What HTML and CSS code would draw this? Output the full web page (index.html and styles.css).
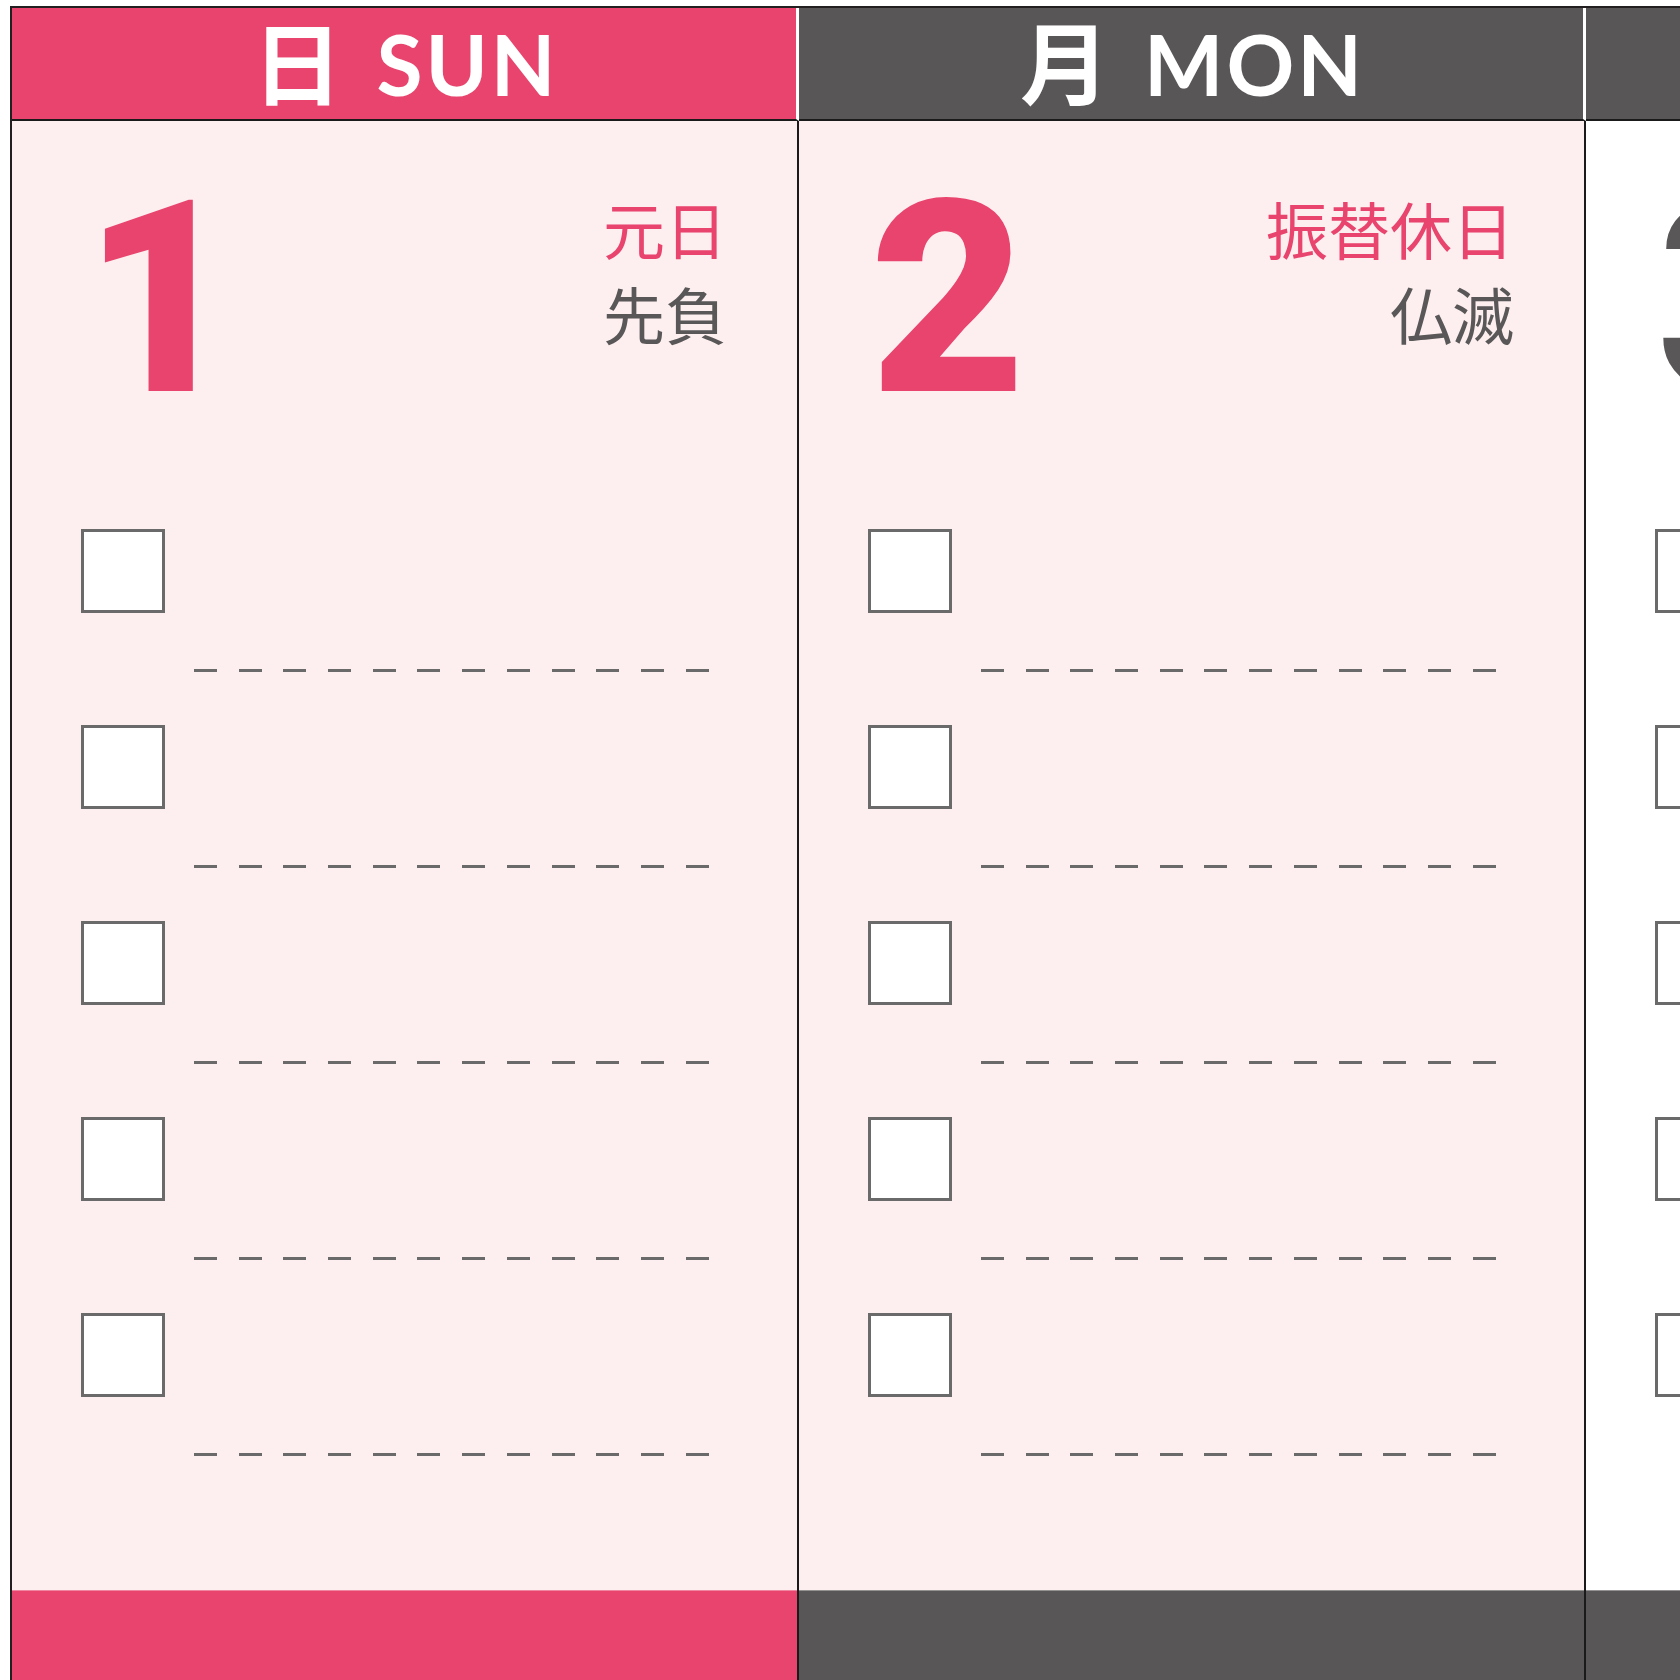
FILE: index.html
```html
<!DOCTYPE html>
<html lang="ja">
<head>
<meta charset="utf-8">
<title>1月 カレンダー</title>
<link rel="stylesheet" href="styles.css">
</head>
<body>
<main class="calendar">
  <section class="day day--holiday day--sun">
    <header class="day-head"><span class="wk-ja">日</span><span class="wk-en">SUN</span></header>
    <div class="day-body">
      <div class="day-top">
        <div class="date">1</div>
        <div class="notes">
          <p class="holiday">元日</p>
          <p class="rokuyo">先負</p>
        </div>
      </div>
      <ul class="tasks">
        <li class="task"><span class="box"></span><span class="rule"></span></li>
        <li class="task"><span class="box"></span><span class="rule"></span></li>
        <li class="task"><span class="box"></span><span class="rule"></span></li>
        <li class="task"><span class="box"></span><span class="rule"></span></li>
        <li class="task"><span class="box"></span><span class="rule"></span></li>
      </ul>
    </div>
    <footer class="day-foot"></footer>
  </section>

  <section class="day day--holiday">
    <header class="day-head"><span class="wk-ja">月</span><span class="wk-en">MON</span></header>
    <div class="day-body">
      <div class="day-top">
        <div class="date">2</div>
        <div class="notes">
          <p class="holiday">振替休日</p>
          <p class="rokuyo">仏滅</p>
        </div>
      </div>
      <ul class="tasks">
        <li class="task"><span class="box"></span><span class="rule"></span></li>
        <li class="task"><span class="box"></span><span class="rule"></span></li>
        <li class="task"><span class="box"></span><span class="rule"></span></li>
        <li class="task"><span class="box"></span><span class="rule"></span></li>
        <li class="task"><span class="box"></span><span class="rule"></span></li>
      </ul>
    </div>
    <footer class="day-foot"></footer>
  </section>

  <section class="day">
    <header class="day-head"><span class="wk-ja">火</span><span class="wk-en">TUE</span></header>
    <div class="day-body">
      <div class="day-top">
        <div class="date">3</div>
        <div class="notes">
          <p class="holiday"></p>
          <p class="rokuyo">大安</p>
        </div>
      </div>
      <ul class="tasks">
        <li class="task"><span class="box"></span><span class="rule"></span></li>
        <li class="task"><span class="box"></span><span class="rule"></span></li>
        <li class="task"><span class="box"></span><span class="rule"></span></li>
        <li class="task"><span class="box"></span><span class="rule"></span></li>
        <li class="task"><span class="box"></span><span class="rule"></span></li>
      </ul>
    </div>
    <footer class="day-foot"></footer>
  </section>
</main>
</body>
</html>
```

FILE: styles.css
```css
* {
  box-sizing: border-box;
}

html,
body {
  margin: 0;
  padding: 0;
  background: #ffffff;
  overflow: hidden;
}

body {
  width: 1680px;
  height: 1680px;
  font-family: "Noto Sans CJK JP", "Noto Sans", sans-serif;
}

.calendar {
  display: flex;
  width: max-content;
  margin: 6px 0 0 10px;
  border-top: 2px solid #231f20;
  border-left: 2px solid #231f20;
}

.day {
  flex: none;
  width: 787px;
  display: flex;
  flex-direction: column;
}

/* header */
.day-head {
  height: 113px;
  background: #595657;
  color: #ffffff;
  border-bottom: 2px solid #1a1a1a;
  border-right: 3px solid #ffffff;
  text-align: center;
  font-family: Lato, "Noto Sans CJK JP", sans-serif;
  font-weight: 700;
  font-size: 84px;
  line-height: 111px;
  white-space: nowrap;
}

.day--sun .day-head,
.day--sun .day-foot {
  background: #e8446d;
}

.wk-ja {
  display: inline-block;
  font-family: "Noto Sans CJK JP", sans-serif;
  font-size: 90px;
  font-weight: 700;
  line-height: 90px;
  margin-right: 34px;
  position: relative;
  top: 2px;
}

.wk-en {
  display: inline-block;
  line-height: 84px;
  letter-spacing: 3px;
  margin-right: -3px;
}

/* body */
.day-body {
  height: 1469px;
  background: #ffffff;
  border-right: 2px solid #1a1a1a;
}

.day--holiday .day-body {
  background: #fdeff0;
}

.day-top {
  height: 408px;
  display: flex;
  justify-content: space-between;
  align-items: flex-start;
  padding: 0 70px 0 71px;
}

.date {
  margin-top: 44px;
  font-family: Roboto, "Liberation Sans", sans-serif;
  font-weight: 900;
  font-size: 269px;
  line-height: 1;
  font-variant-numeric: tabular-nums;
  color: #595757;
}

.day--holiday .date {
  color: #e8446d;
}

.notes {
  margin-top: 65px;
  text-align: right;
  font-size: 62px;
  font-weight: 400;
  line-height: 85px;
}

.notes p {
  margin: 0;
  height: 85px;
}

.holiday {
  color: #e8446d;
}

.rokuyo {
  color: #595757;
}

/* tasks */
.tasks {
  list-style: none;
  margin: 0;
  padding: 0;
}

.task {
  height: 196px;
  padding-left: 69px;
}

.box {
  display: block;
  width: 84px;
  height: 84px;
  background: #ffffff;
  border: 3px solid #6a6a6a;
}

.rule {
  display: block;
  width: 515px;
  height: 3px;
  margin: 56px 0 0 113px;
  background: repeating-linear-gradient(90deg, #6a6a6a 0 23px, transparent 23px 44.7px);
}

/* footer */
.day-foot {
  height: 120px;
  background: #595657;
  border-right: 2px solid #1a1a1a;
  box-shadow: inset 0 1px 0 rgba(255, 255, 255, 0.35);
}
```
